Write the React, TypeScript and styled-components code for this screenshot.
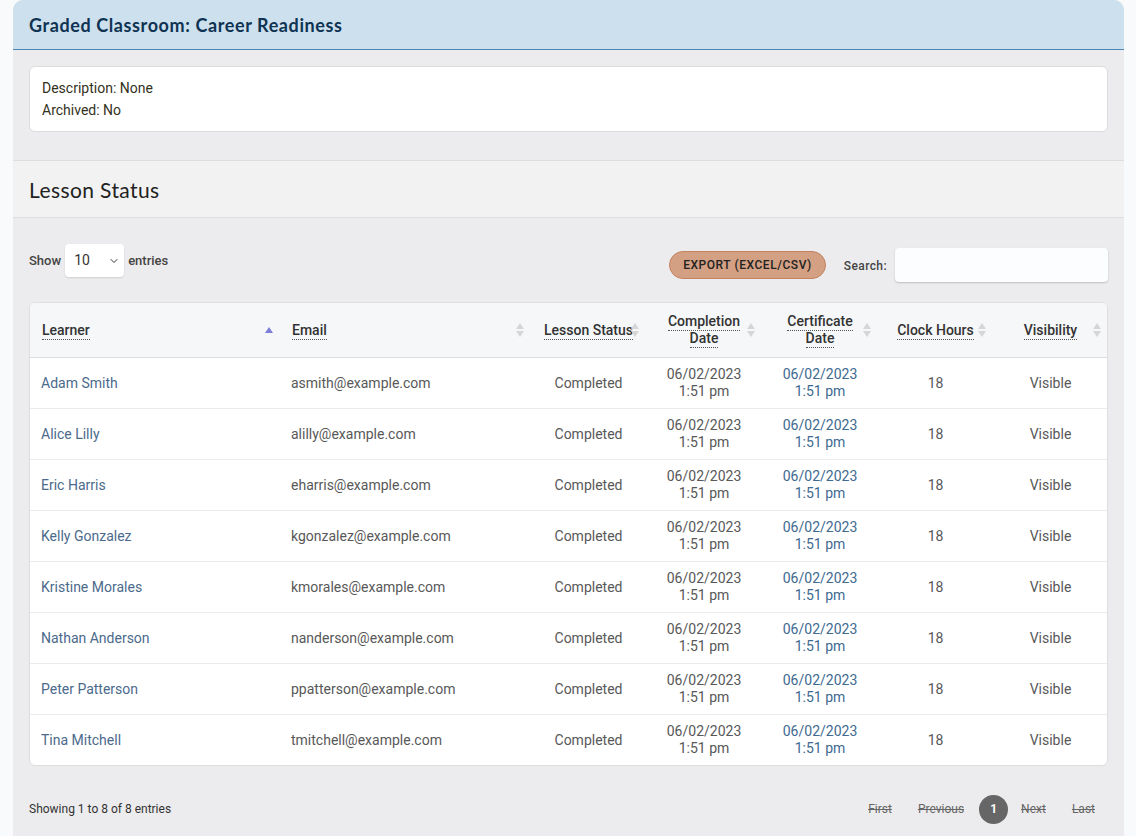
import React from "react";
import styled, { createGlobalStyle } from "styled-components";
import { ChevronDown } from "lucide-react";

const GlobalStyle = createGlobalStyle`
  * { box-sizing: border-box; }
  body {
    margin: 0;
    background: #f8fafc;
    font-family: Roboto, "Liberation Sans", Arial, sans-serif;
  }
`;

const Panel = styled.div`
  margin: 0 12px 0 13px;
  background: #ececee;
  border-radius: 10px 10px 0 0;
  min-height: 850px;
`;

const PanelHeader = styled.div`
  height: 50px;
  background: #cde0ee;
  border-bottom: 1px solid #4a87b5;
  border-radius: 10px 10px 0 0;
  display: flex;
  align-items: center;
  padding: 0 16px;
`;

const PanelTitle = styled.h1`
  margin: 0;
  font-family: Lato, "Open Sans", sans-serif;
  font-size: 18px;
  font-weight: 700;
  color: #0f3352;
  letter-spacing: 0.6px;
`;

const PanelBody = styled.div`
  padding: 16px 16px 28px;
`;

const InfoCard = styled.div`
  background: #fff;
  border: 1px solid #dcdcdc;
  border-radius: 6px;
  padding: 10px 12px 10px;
  font-size: 14px;
  line-height: 22px;
  color: #33311c;
`;

const SectionHeader = styled.div`
  height: 58px;
  background: #f2f2f3;
  border-top: 1px solid #dedede;
  border-bottom: 1px solid #dedede;
  display: flex;
  align-items: center;
  padding: 0 16px;
`;

const SectionTitle = styled.h2`
  margin: 0;
  font-family: Lato, "Open Sans", sans-serif;
  font-size: 21px;
  font-weight: 400;
  color: #222;
  letter-spacing: 0.4px;
`;

const SectionBody = styled.div`
  padding: 30px 16px 0;
`;

const Controls = styled.div`
  display: flex;
  align-items: center;
  justify-content: space-between;
  height: 34px;
  margin-bottom: 20px;
`;

const Length = styled.label`
  display: flex;
  align-items: center;
  gap: 4px;
  font-size: 13px;
  font-weight: 500;
  color: #444;
  margin-top: -10px;
`;

const SelectWrap = styled.div`
  position: relative;
  width: 59px;
  height: 33px;
`;

const Select = styled.select`
  appearance: none;
  width: 100%;
  height: 100%;
  border: none;
  border-radius: 4px;
  background: #fff;
  box-shadow: 0 1px 2px rgba(0, 0, 0, 0.12);
  padding: 0 0 0 9px;
  font-family: inherit;
  font-size: 14px;
  color: #333;
`;

const Chevron = styled(ChevronDown)`
  position: absolute;
  right: 4px;
  top: 11px;
  pointer-events: none;
  color: #333;
`;

const RightControls = styled.div`
  display: flex;
  align-items: center;
`;

const ExportButton = styled.button`
  height: 28px;
  padding: 0 13px;
  border-radius: 14px;
  background: #d4a083;
  border: 1px solid #c4825f;
  font-family: inherit;
  font-size: 12px;
  font-weight: 500;
  color: #222;
  letter-spacing: 0.55px;
  margin-right: 18px;
`;

const SearchLabel = styled.label`
  display: flex;
  align-items: center;
  gap: 8px;
  font-size: 12px;
  font-weight: 500;
  color: #444;
  letter-spacing: 0.4px;
  padding-top: 2px;
`;

const SearchInput = styled.input`
  width: 213px;
  height: 34px;
  border: none;
  border-radius: 4px;
  background: #fcfdfe;
  box-shadow: 0 1px 2px rgba(0, 0, 0, 0.2);
  margin-top: -2px;
`;

const TableCard = styled.div`
  background: #fff;
  border: 1px solid #dedede;
  border-radius: 6px;
  overflow: hidden;
`;

const Table = styled.table`
  width: 100%;
  table-layout: fixed;
  border-collapse: separate;
  border-spacing: 0;
`;

const Th = styled.th<{ $align?: "left" | "center" }>`
  position: relative;
  height: 55px;
  padding: 0 12px;
  background: #f6f7f9;
  border-bottom: 1px solid #dcdcdc;
  text-align: ${(p) => p.$align || "center"};
  font-size: 14px;
  font-weight: 500;
  color: #333;
  line-height: 17px;
  vertical-align: middle;
`;

const HeadLabel = styled.span`
  border-bottom: 1px dotted #555;
  padding-bottom: 1px;
`;

const SortIcon = styled.span`
  position: absolute;
  right: 7px;
  top: 50%;
  transform: translateY(-50%);
  display: flex;
  flex-direction: column;
  gap: 2px;
`;

const Tri = styled.span<{ $dir: "up" | "down"; $color: string }>`
  width: 0;
  height: 0;
  border-left: 4px solid transparent;
  border-right: 4px solid transparent;
  ${(p) =>
    p.$dir === "up"
      ? `border-bottom: 6px solid ${p.$color};`
      : `border-top: 6px solid ${p.$color};`}
`;

const Td = styled.td<{ $align?: "left" | "center"; $color?: string }>`
  height: 51px;
  padding: 0 12px 0 ${(p) => (p.$align === "left" ? "11px" : "12px")};
  border-top: 1px solid #ebebeb;
  text-align: ${(p) => p.$align || "center"};
  font-size: 14px;
  line-height: 17px;
  color: ${(p) => p.$color || "#585858"};
  vertical-align: middle;
`;

const FirstRow = styled.tr`
  td { border-top: none; height: 50px; }
`;

const Footer = styled.div`
  display: flex;
  align-items: center;
  justify-content: space-between;
  height: 30px;
  margin-top: 28px;
`;

const Info = styled.div`
  font-size: 12px;
  color: #333;
`;

const Pager = styled.div`
  display: flex;
  align-items: center;
`;

const PageLink = styled.span`
  font-size: 12px;
  color: #666;
  text-decoration: line-through;
  padding: 0 13px;
`;

const PageCurrent = styled.span`
  width: 29px;
  height: 29px;
  margin-left: 2px;
  border-radius: 50%;
  background: #666;
  color: #fff;
  font-size: 12px;
  font-weight: 700;
  display: flex;
  align-items: center;
  justify-content: center;
`;

type Col = { label: string; second?: string; width: number; align?: "left" | "center"; active?: boolean };

const columns: Col[] = [
  { label: "Learner", width: 250, align: "left", active: true },
  { label: "Email", width: 251, align: "left" },
  { label: "Lesson Status", width: 115 },
  { label: "Completion", second: "Date", width: 116 },
  { label: "Certificate", second: "Date", width: 116 },
  { label: "Clock Hours", width: 115 },
  { label: "Visibility", width: 115 },
];

const learners = [
  ["Adam Smith", "asmith@example.com"],
  ["Alice Lilly", "alilly@example.com"],
  ["Eric Harris", "eharris@example.com"],
  ["Kelly Gonzalez", "kgonzalez@example.com"],
  ["Kristine Morales", "kmorales@example.com"],
  ["Nathan Anderson", "nanderson@example.com"],
  ["Peter Patterson", "ppatterson@example.com"],
  ["Tina Mitchell", "tmitchell@example.com"],
];

export default function App() {
  return (
    <>
      <GlobalStyle />
      <Panel>
        <PanelHeader>
          <PanelTitle>Graded Classroom: Career Readiness</PanelTitle>
        </PanelHeader>
        <PanelBody>
          <InfoCard>
            <div>Description: None</div>
            <div>Archived: No</div>
          </InfoCard>
        </PanelBody>
        <SectionHeader>
          <SectionTitle>Lesson Status</SectionTitle>
        </SectionHeader>
        <SectionBody>
          <Controls>
            <Length>
              Show
              <SelectWrap>
                <Select defaultValue="10">
                  <option>10</option>
                  <option>25</option>
                  <option>50</option>
                </Select>
                <Chevron size={12} strokeWidth={2} />
              </SelectWrap>
              entries
            </Length>
            <RightControls>
              <ExportButton>EXPORT (EXCEL/CSV)</ExportButton>
              <SearchLabel>
                Search:
                <SearchInput type="search" />
              </SearchLabel>
            </RightControls>
          </Controls>
          <TableCard>
            <Table>
              <colgroup>
                {columns.map((c, i) => (
                  <col key={i} style={{ width: c.width }} />
                ))}
              </colgroup>
              <thead>
                <tr>
                  {columns.map((c, i) => (
                    <Th key={i} $align={c.align}>
                      <HeadLabel>{c.label}</HeadLabel>
                      {c.second && (
                        <>
                          <br />
                          <HeadLabel>{c.second}</HeadLabel>
                        </>
                      )}
                      <SortIcon>
                        {c.active ? (
                          <Tri $dir="up" $color="#7d7ed8" />
                        ) : (
                          <>
                            <Tri $dir="up" $color="#d6d6d6" />
                            <Tri $dir="down" $color="#d6d6d6" />
                          </>
                        )}
                      </SortIcon>
                    </Th>
                  ))}
                </tr>
              </thead>
              <tbody>
                {learners.map(([name, email], i) => {
                  const Row = i === 0 ? FirstRow : "tr";
                  return (
                    <Row key={name}>
                      <Td $align="left" $color="#4b6a8c">{name}</Td>
                      <Td $align="left">{email}</Td>
                      <Td>Completed</Td>
                      <Td>
                        06/02/2023
                        <br />
                        1:51 pm
                      </Td>
                      <Td $color="#3e6a90">
                        06/02/2023
                        <br />
                        1:51 pm
                      </Td>
                      <Td>18</Td>
                      <Td>Visible</Td>
                    </Row>
                  );
                })}
              </tbody>
            </Table>
          </TableCard>
          <Footer>
            <Info>Showing 1 to 8 of 8 entries</Info>
            <Pager>
              <PageLink>First</PageLink>
              <PageLink>Previous</PageLink>
              <PageCurrent>1</PageCurrent>
              <PageLink>Next</PageLink>
              <PageLink>Last</PageLink>
            </Pager>
          </Footer>
        </SectionBody>
      </Panel>
    </>
  );
}
